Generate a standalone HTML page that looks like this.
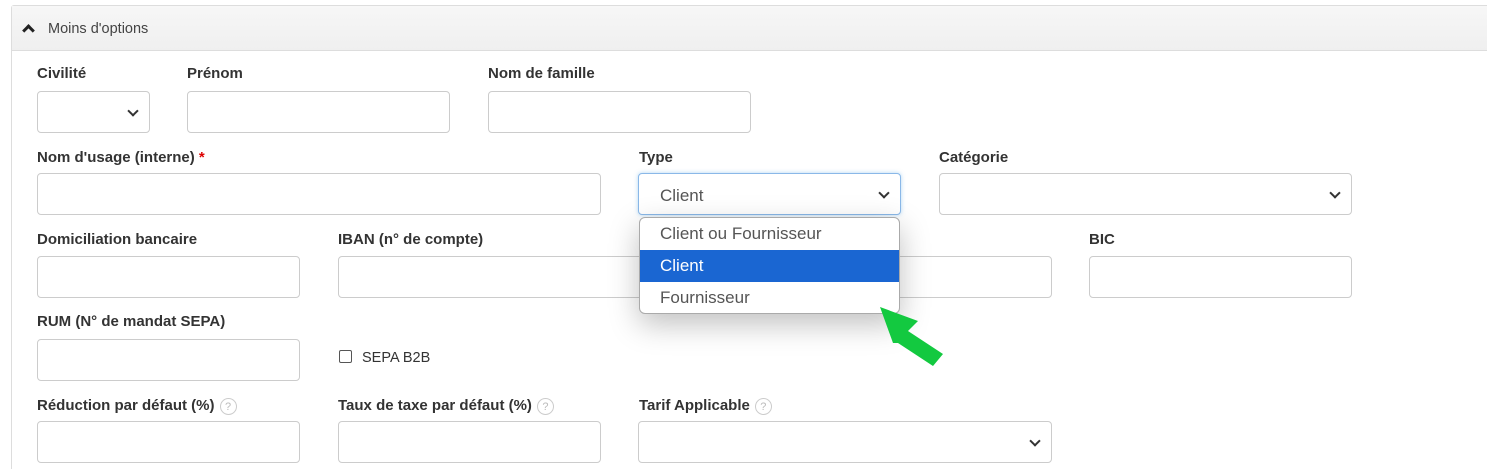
<!DOCTYPE html>
<html style="height:469px;overflow:hidden"><head><meta charset="utf-8"><style>
body{margin:0;width:1487px;height:469px;background:#fff;font-family:"Liberation Sans",Arial,sans-serif;position:relative;overflow:hidden}
.a{position:absolute}
.panel{left:11px;top:5px;width:1490px;height:480px;border:1px solid #ddd;border-radius:3px}
.hdr{left:12px;top:6px;width:1490px;height:44px;background:linear-gradient(#f7f7f7,#efefef);border-bottom:1px solid #ddd}
.lbl{font-size:15px;font-weight:bold;color:#333}
.in{border:1px solid #ccc;border-radius:4px;box-sizing:border-box;height:42px;background:#fff}
.chev{position:absolute;right:12px;top:15px;width:6px;height:6px;border-right:2px solid #333;border-bottom:2px solid #333;transform:rotate(45deg)}
.q{display:inline-block;width:17px;height:17px;border:1px solid #ccc;border-radius:50%;font-size:11px;color:#bbb;text-align:center;line-height:16px;font-weight:normal;vertical-align:middle;margin-left:5px;box-sizing:border-box}
.opt{position:absolute;left:0;width:260px;height:32px;font-size:17px;color:#555;padding-left:20px;box-sizing:border-box;line-height:32px}
</style></head><body>
<div class="a panel"></div>
<div class="a hdr"></div>
<div class="a" style="left:24px;top:26px;width:6px;height:6px;border-left:3px solid #222;border-top:3px solid #222;transform:rotate(45deg)"></div>
<div class="a" style="left:48px;top:21px;font-size:14.5px;color:#444">Moins d'options</div>

<div class="a lbl" style="left:37px;top:65px">Civilité</div>
<div class="a lbl" style="left:187px;top:65px">Prénom</div>
<div class="a lbl" style="left:488px;top:65px">Nom de famille</div>
<div class="a in" style="left:37px;top:91px;width:113px"><div class="chev"></div></div>
<div class="a in" style="left:187px;top:91px;width:263px"></div>
<div class="a in" style="left:488px;top:91px;width:263px"></div>

<div class="a lbl" style="left:37px;top:149px">Nom d'usage (interne) <span style="color:#d00">*</span></div>
<div class="a lbl" style="left:639px;top:149px">Type</div>
<div class="a lbl" style="left:939px;top:149px">Catégorie</div>
<div class="a in" style="left:37px;top:173px;width:564px"></div>
<div class="a in" style="left:638px;top:173px;width:263px;border-color:#8ab8e8;box-shadow:0 0 4px rgba(102,175,233,.5)"><div style="position:absolute;left:21px;top:12px;font-size:17px;color:#555">Client</div><div class="chev"></div></div>
<div class="a in" style="left:939px;top:173px;width:413px"><div class="chev"></div></div>

<div class="a lbl" style="left:37px;top:231px">Domiciliation bancaire</div>
<div class="a lbl" style="left:338px;top:231px">IBAN (n° de compte)</div>
<div class="a lbl" style="left:1089px;top:231px">BIC</div>
<div class="a in" style="left:37px;top:256px;width:263px"></div>
<div class="a in" style="left:338px;top:256px;width:714px"></div>
<div class="a in" style="left:1089px;top:256px;width:263px"></div>

<div class="a lbl" style="left:37px;top:313px">RUM (N° de mandat SEPA)</div>
<div class="a in" style="left:37px;top:339px;width:263px"></div>
<div class="a" style="left:339px;top:350px;width:13px;height:13px;border:1px solid #555;border-radius:2px;box-sizing:border-box"></div>
<div class="a" style="left:362px;top:350px;font-size:14.5px;color:#333">SEPA B2B</div>

<div class="a lbl" style="left:37px;top:397px">Réduction par défaut (%)<span class="q">?</span></div>
<div class="a lbl" style="left:338px;top:397px">Taux de taxe par défaut (%)<span class="q">?</span></div>
<div class="a lbl" style="left:639px;top:397px">Tarif Applicable<span class="q">?</span></div>
<div class="a in" style="left:37px;top:421px;width:263px"></div>
<div class="a in" style="left:338px;top:421px;width:263px"></div>
<div class="a in" style="left:638px;top:421px;width:414px"><div class="chev"></div></div>

<div class="a" style="left:639px;top:217px;width:261px;height:97px;background:#fff;border:1px solid #aaa;border-radius:6px;box-sizing:border-box;box-shadow:0 10px 30px rgba(0,0,0,.25);overflow:hidden">
<div class="opt" style="top:0">Client ou Fournisseur</div>
<div class="opt" style="top:32px;background:#1a66d2;color:#fff">Client</div>
<div class="opt" style="top:64px">Fournisseur</div>
</div>
<svg class="a" style="left:0;top:0" width="1487" height="469"><polygon points="880,307 918,321 908,331 943,354 933,366 898,343 893,343" fill="#13c940"/></svg>
</body></html>
